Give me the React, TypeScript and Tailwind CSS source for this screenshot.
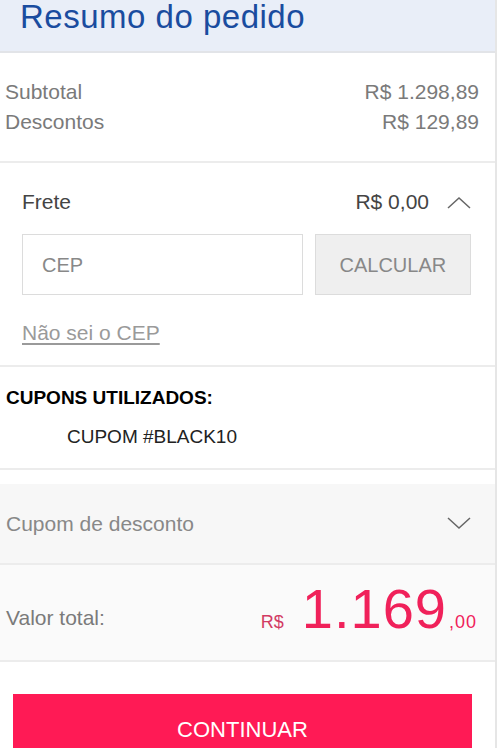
import React from 'react';

function Chevron({ up }: { up?: boolean }) {
  return (
    <svg width="24" height="13" viewBox="0 0 24 13" fill="none" className="text-[#666]">
      <polyline
        points={up ? '1,12 12,2 23,12' : '1,1 12,11 23,1'}
        stroke="currentColor"
        strokeWidth="1.5"
      />
    </svg>
  );
}

export default function App() {
  return (
    <div className="h-[748px] w-[500px] overflow-hidden bg-white font-['Liberation_Sans',Arial,sans-serif]">
      <div className="w-[497px] border-r-2 border-[#e6e6e6]">
        {/* header */}
        <div className="border-b-2 border-[#e2e4e8] bg-[#e9eef8] pb-[18px] pl-[20px]">
          <h1 className="text-[33px] leading-none tracking-[0.5px] text-[#1a4c9f]">Resumo do pedido</h1>
        </div>

        {/* subtotal */}
        <div className="border-b-2 border-[#ececec] px-[5px] pb-[24px] pr-[16px] pt-[24px] text-[21px] leading-[30px] text-[#7a7a7a]">
          <div className="flex justify-between">
            <span>Subtotal</span>
            <span>R$ 1.298,89</span>
          </div>
          <div className="flex justify-between">
            <span>Descontos</span>
            <span>R$ 129,89</span>
          </div>
        </div>

        {/* frete */}
        <div className="border-b-2 border-[#ececec] pb-[17px] pl-[22px] pr-[24px] pt-[24px]">
          <div className="flex items-center justify-between text-[21px] leading-[30px] text-[#444]">
            <span>Frete</span>
            <div className="flex items-center gap-[18px]">
              <span>R$ 0,00</span>
              <Chevron up />
            </div>
          </div>
          <div className="mt-[17px] flex gap-[12px]">
            <div className="flex h-[61px] w-[282px] items-center border border-[#dcdcdc] pl-[19px] text-[20px] text-[#888]">
              CEP
            </div>
            <button className="flex h-[61px] w-[157px] items-center justify-center border border-[#dcdcdc] bg-[#efefef] text-[20px] text-[#888]">
              CALCULAR
            </button>
          </div>
          <div className="mt-[23px] text-[21px] leading-[30px] text-[#9a9a9a] underline underline-offset-[3px]">
            Não sei o CEP
          </div>
        </div>

        {/* cupons */}
        <div className="border-b-2 border-[#ececec] pb-[16px] pt-[16px]">
          <div className="pl-[6px] text-[19px] font-bold leading-[30px] text-black">CUPONS UTILIZADOS:</div>
          <div className="mt-[9px] pl-[67px] text-[19px] leading-[30px] text-[#222]">CUPOM #BLACK10</div>
        </div>

        {/* cupom de desconto */}
        <div className="mt-[14px] flex h-[81px] items-center justify-between border-b-2 border-[#ececec] bg-[#f7f7f7] pl-[6px] pr-[24px] text-[21px] text-[#888]">
          <span>Cupom de desconto</span>
          <Chevron />
        </div>

        {/* total */}
        <div className="flex h-[97px] items-center justify-between border-b-2 border-[#ececec] bg-[#fafafa] pl-[6px] pr-[18px]">
          <span className="mt-[10px] text-[21px] text-[#7a7a7a]">Valor total:</span>
          <div className="mb-[8px] flex items-baseline text-[#f0215a]">
            <span className="mr-[18px] text-[18px] text-[#d23a63]">R$</span>
            <span className="text-[56px] leading-none tracking-[1px]">1.169</span>
            <span className="pl-[2px] text-[18px] tracking-[1px]">,00</span>
          </div>
        </div>

        {/* continuar */}
        <div className="px-[13px] pt-[32px]">
          <button className="flex h-[70px] w-[459px] items-center justify-center bg-[#ff1a55] text-[22px] text-white">
            CONTINUAR
          </button>
        </div>
      </div>
    </div>
  );
}
